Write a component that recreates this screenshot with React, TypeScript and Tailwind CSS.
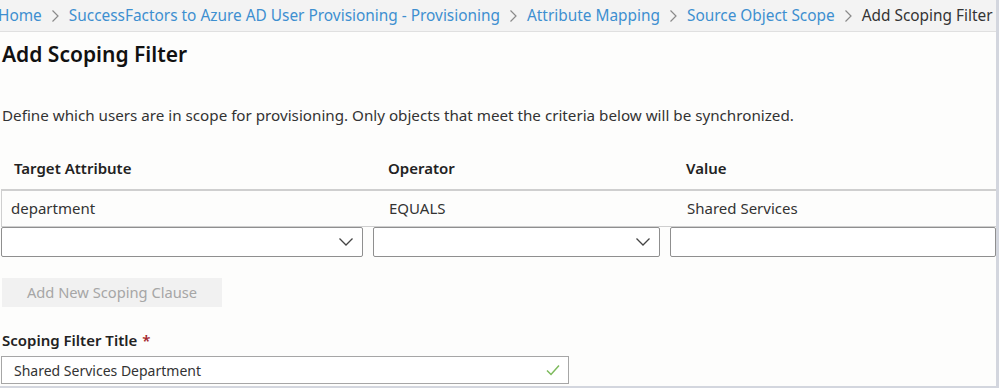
import React from "react";

const crumbs = [
  "SuccessFactors to Azure AD User Provisioning - Provisioning",
  "Attribute Mapping",
  "Source Object Scope",
];

const Chevron = () => (
  <svg width="16" height="10" viewBox="0 0 16 10" fill="none">
    <path d="M1.5 1.5 L8 8 L14.5 1.5" stroke="#444" strokeWidth="1.3" />
  </svg>
);

const Sep = () => (
  <svg width="9" height="14" viewBox="0 0 9 14" fill="none" className="mx-[9px]">
    <path d="M1.5 1.5 L7 7 L1.5 12.5" stroke="#8a8a8a" strokeWidth="1.2" />
  </svg>
);

const App: React.FC = () => {
  return (
    <div
      className="w-[999px] h-[388px] overflow-hidden bg-[#fdfdfc] text-[#2b2b2b] flex flex-col border-r-[3px] border-b-2 border-[#d3d6de]"
      style={{ fontFamily: '"Noto Sans", "Open Sans", sans-serif' }}
    >
      <div className="h-[32px] shrink-0 bg-[#f3f3f3] border-b border-[#e0e0e0] flex items-center text-[15.4px] whitespace-nowrap -ml-[2px]">
        <span className="text-[#3d8fd0]">Home</span>
        {crumbs.map((c) => (
          <React.Fragment key={c}>
            <Sep />
            <span className="text-[#3d8fd0]">{c}</span>
          </React.Fragment>
        ))}
        <Sep />
        <span className="text-[#333]">Add Scoping Filter</span>
      </div>

      <div className="h-[46px] shrink-0 flex items-center pl-[2px] text-[21px] font-semibold text-[#111]">
        Add Scoping Filter
      </div>

      <div className="mt-[18px] h-[38px] shrink-0 flex items-center pl-[2px] text-[15.2px] text-[#333] whitespace-nowrap">
        Define which users are in scope for provisioning. Only objects that meet the criteria below will be synchronized.
      </div>

      <div className="mt-[13px] h-[42px] shrink-0 grid grid-cols-[374px_299px_1fr] items-center text-[15px] font-semibold text-[#222]">
        <div className="pl-[14px]">Target Attribute</div>
        <div className="pl-[14px]">Operator</div>
        <div className="pl-[13px]">Value</div>
      </div>

      <div className="ml-[1px] h-[38px] shrink-0 border-t-2 border-l border-b border-[#cfcfcf] grid grid-cols-[373px_299px_1fr] items-center text-[15px] text-[#333]">
        <div className="pl-[9px]">department</div>
        <div className="pl-[14px]">EQUALS</div>
        <div className="pl-[13px]">Shared Services</div>
      </div>

      <div className="ml-[1px] flex gap-[10px] h-[30px] shrink-0">
        <div className="w-[362px] border border-[#8f8f8f] rounded-[2px] flex items-center justify-end pr-[8px] bg-white">
          <Chevron />
        </div>
        <div className="w-[287px] border border-[#8f8f8f] rounded-[2px] flex items-center justify-end pr-[8px] bg-white">
          <Chevron />
        </div>
        <div className="flex-1 border border-[#8f8f8f] rounded-[2px] bg-white" />
      </div>

      <div className="mt-[21px] ml-[2px] w-[220px] h-[29px] shrink-0 bg-[#f1f1f1] text-[#a6a6a6] text-[14.7px] flex items-center justify-center">
        Add New Scoping Clause
      </div>

      <div className="mt-[23px] h-[20px] shrink-0 flex items-center pl-[2px] text-[15px] font-semibold text-[#222]">
        Scoping Filter Title <span className="ml-[5px] text-[#a4262c]">*</span>
      </div>

      <div className="mt-[6px] ml-[1px] w-[568px] h-[28px] shrink-0 border border-[#a6a6a6] flex items-center justify-between pl-[12px] pr-[8px] text-[14px] text-[#333] bg-white">
        <span>Shared Services Department</span>
        <svg width="14" height="12" viewBox="0 0 14 12" fill="none">
          <path d="M1 6.5 L5 10.5 L13 1.5" stroke="#7dba5c" strokeWidth="1.5" />
        </svg>
      </div>
    </div>
  );
};

export default App;
